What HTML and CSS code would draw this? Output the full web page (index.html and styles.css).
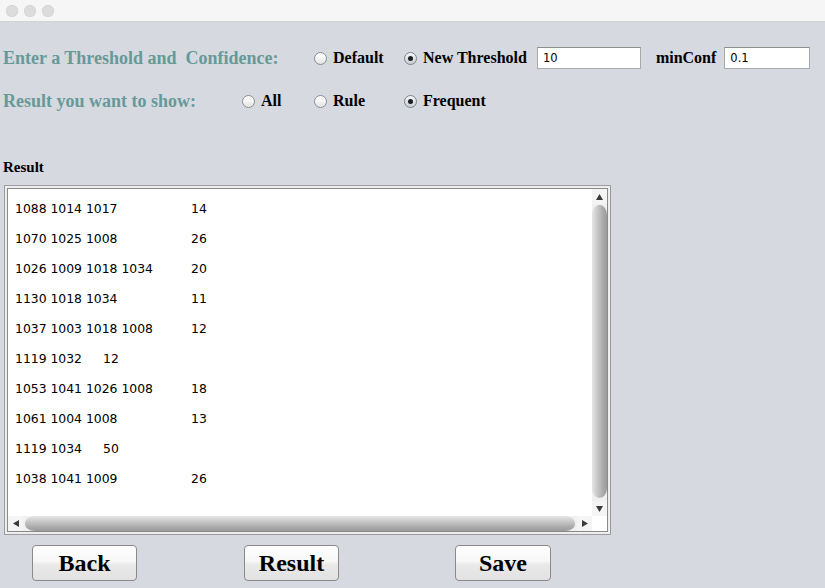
FILE: index.html
```html
<!DOCTYPE html>
<html>
<head>
<meta charset="utf-8">
<link rel="stylesheet" href="styles.css">
</head>
<body>
<div class="window">
  <div class="titlebar">
    <span class="light"></span><span class="light"></span><span class="light"></span>
  </div>
  <div class="main">
    <div class="row row1">
      <span class="heading head1">Enter a Threshold and  Confidence:</span>
      <span class="radio w90"><span class="circle"></span>Default</span>
      <span class="radio on"><span class="circle"></span>New Threshold</span>
      <span class="field field1">10</span>
      <span class="lbl">minConf</span>
      <span class="field field2">0.1</span>
    </div>
    <div class="row row2">
      <span class="heading head2">Result you want to show:</span>
      <span class="radio w72"><span class="circle"></span>All</span>
      <span class="radio w90"><span class="circle"></span>Rule</span>
      <span class="radio on"><span class="circle"></span>Frequent</span>
    </div>
    <div class="result-label">Result</div>
    <div class="pane">
      <div class="pane-inner">
        <pre class="text">1088 1014 1017	14
1070 1025 1008	26
1026 1009 1018 1034	20
1130 1018 1034	11
1037 1003 1018 1008	12
1119 1032	12
1053 1041 1026 1008	18
1061 1004 1008	13
1119 1034	50
1038 1041 1009	26</pre>
        <div class="vbar">
          <div class="arrow"><svg width="7" height="6" viewBox="0 0 7 6"><polygon points="3.5,0 7,6 0,6" fill="#3a3a3a"/></svg></div>
          <div class="vthumb"></div>
          <div class="arrow"><svg width="7" height="6" viewBox="0 0 7 6"><polygon points="0,0 7,0 3.5,6" fill="#3a3a3a"/></svg></div>
        </div>
        <div class="hbar">
          <div class="harrow"><svg width="6" height="7" viewBox="0 0 6 7"><polygon points="0,3.5 6,0 6,7" fill="#3a3a3a"/></svg></div>
          <div class="hthumb"></div>
          <div class="harrow"><svg width="6" height="7" viewBox="0 0 6 7"><polygon points="0,0 6,3.5 0,7" fill="#3a3a3a"/></svg></div>
        </div>
        <div class="corner"></div>
      </div>
    </div>
    <div class="buttons">
      <span class="btn btn-back">Back</span>
      <span class="btn btn-result">Result</span>
      <span class="btn btn-save">Save</span>
    </div>
  </div>
</div>
</body>
</html>
```

FILE: styles.css
```css
html, body {
  margin: 0;
  padding: 0;
}
body {
  width: 825px;
  height: 588px;
  overflow: hidden;
  background: #d6d9df;
  font-family: "Liberation Serif", "Times New Roman", serif;
}
.window {
  width: 825px;
  height: 588px;
  background: #d6d9df;
}
.titlebar {
  height: 21px;
  background: #f6f6f6;
  border-bottom: 1px solid #d2d2d2;
  display: flex;
  align-items: center;
  padding-left: 6px;
  gap: 6px;
}
.light {
  width: 12px;
  height: 12px;
  border-radius: 50%;
  background: #dcdcdc;
  box-shadow: inset 0 0 0 0.5px #d0d0d0;
}
.main {
  padding-left: 3px;
}
.row {
  display: flex;
  align-items: center;
  height: 22px;
}
.row1 {
  margin-top: 25px;
}
.row2 {
  margin-top: 21px;
}
.heading {
  color: #669999;
  font-weight: bold;
  font-size: 18px;
  white-space: pre;
}
.head1 {
  width: 311px;
}
.head2 {
  width: 239px;
}
.radio {
  display: flex;
  align-items: center;
  font-weight: bold;
  font-size: 16px;
  color: #000;
}
.w90 {
  width: 90px;
}
.w72 {
  width: 72px;
}
.circle {
  width: 11px;
  height: 11px;
  border-radius: 50%;
  border: 1px solid #8d8d8d;
  background: linear-gradient(#ffffff, #f4f4f4 50%, #e2e2e2);
  margin-right: 6px;
  position: relative;
  box-sizing: content-box;
}
.on .circle {
  background: linear-gradient(#f6f8fa, #dde2e8 50%, #c9ced6);
  border-color: #7d8189;
}
.on .circle::after {
  content: "";
  position: absolute;
  left: 3px;
  top: 3px;
  width: 5px;
  height: 5px;
  border-radius: 50%;
  background: #1e1e1e;
}
.field {
  box-sizing: border-box;
  height: 22px;
  background: #fff;
  border: 1px solid #a9a9a9;
  border-top-color: #8e8e8e;
  font-family: "DejaVu Sans", "Liberation Sans", sans-serif;
  font-size: 11.5px;
  line-height: 20px;
  padding-left: 5px;
  color: #000;
}
.field1 {
  width: 104px;
  margin-left: 10px;
}
.lbl {
  font-weight: bold;
  font-size: 16px;
  margin-left: 15px;
}
.field2 {
  width: 86px;
  margin-left: 8px;
}
.result-label {
  margin-top: 46px;
  height: 18px;
  line-height: 18px;
  font-weight: bold;
  font-size: 15px;
}
.pane {
  margin-top: 9px;
  margin-left: 1px;
  width: 607px;
  height: 350px;
  box-sizing: border-box;
  border: 1px solid #9c9c9c;
  background: #eeeeee;
  padding: 2px;
}
.pane-inner {
  box-sizing: border-box;
  height: 100%;
  border: 1px solid #8a8a8a;
  display: grid;
  grid-template-columns: 1fr 15px;
  grid-template-rows: 1fr 15px;
  background: #fff;
}
.text {
  margin: 0;
  padding: 5px 0 0 7px;
  font-family: "DejaVu Sans", "Liberation Sans", sans-serif;
  font-size: 12.4px;
  line-height: 30px;
  tab-size: 88px;
  -moz-tab-size: 88px;
  color: #000;
  overflow: hidden;
  background: #fff;
}
.vbar {
  display: flex;
  flex-direction: column;
  background: #f0f0f0;
}
.arrow {
  height: 15px;
  display: flex;
  align-items: center;
  justify-content: center;
  background: #f4f4f4;
}
.vthumb {
  flex: 1;
  margin: 1px 0 3px 0;
  border-radius: 7px 7px 7px 7px / 10px 10px 10px 10px;
  background: linear-gradient(to right, #e6e6e6, #c9c9c9 35%, #a9a9a9 75%, #9a9a9a);
}
.hbar {
  display: flex;
  background: #f0f0f0;
}
.harrow {
  width: 15px;
  display: flex;
  align-items: center;
  justify-content: center;
  background: #f4f4f4;
}
.hthumb {
  flex: 1;
  margin: 0 2px;
  border-radius: 10px 10px 10px 10px / 7px 7px 7px 7px;
  background: linear-gradient(#e6e6e6, #c9c9c9 35%, #a9a9a9 75%, #9a9a9a);
}
.corner {
  background: #fff;
}
.buttons {
  display: flex;
  margin-top: 10px;
  padding-left: 29px;
}
.btn {
  box-sizing: border-box;
  height: 36px;
  border: 1px solid #8a8a8a;
  border-radius: 4px;
  background: linear-gradient(#ffffff, #f7f7f7 45%, #e9e9e9 55%, #e2e2e2);
  font-weight: bold;
  font-size: 24px;
  display: flex;
  align-items: center;
  justify-content: center;
  color: #000;
}
.btn-back {
  width: 105px;
}
.btn-result {
  width: 95px;
  margin-left: 107px;
}
.btn-save {
  width: 96px;
  margin-left: 116px;
}
```
